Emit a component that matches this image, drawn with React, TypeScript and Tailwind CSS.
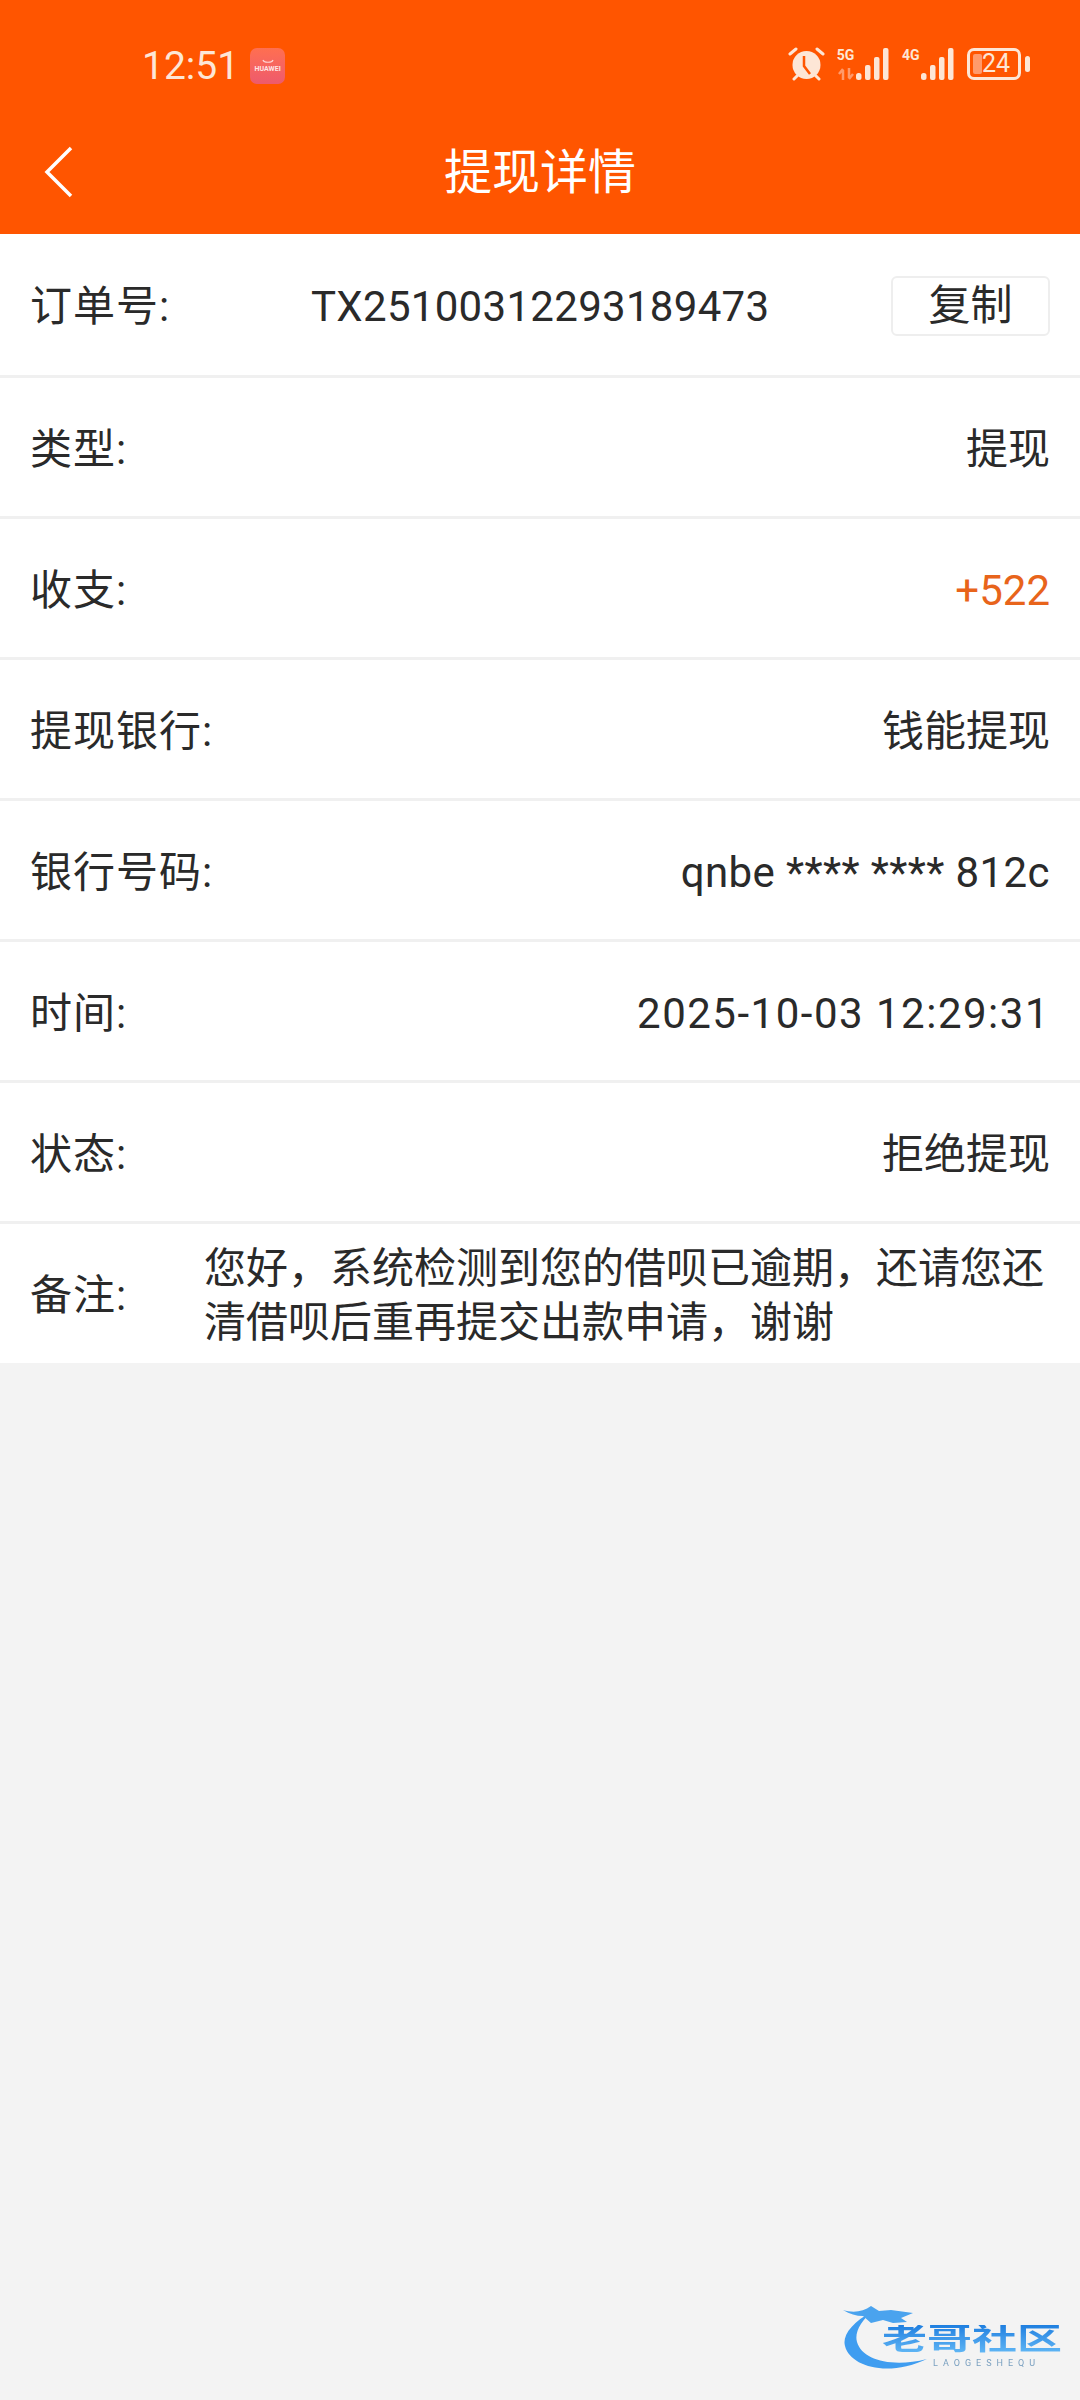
const rows = [
  { label: '类型:', value: '提现' },
  { label: '收支:', value: '+522', accent: true },
  { label: '提现银行:', value: '钱能提现' },
  { label: '银行号码:', value: 'qnbe **** **** 812c', spacing: 'tracking-[0.4px]' },
  { label: '时间:', value: '2025-10-03 12:29:31', spacing: 'tracking-[1.5px]' },
  { label: '状态:', value: '拒绝提现' },
];

function Bars() {
  return (
    <svg width="33" height="32" viewBox="0 0 33 32" fill="#fde6d6">
      <rect x="0" y="25" width="5.5" height="7" rx="2.5" />
      <rect x="9" y="17" width="5.5" height="15" rx="2" />
      <rect x="18" y="9" width="5.5" height="23" rx="2" />
      <rect x="27" y="0" width="5.5" height="32" rx="2" />
    </svg>
  );
}

function StatusBar() {
  return (
    <div className="h-[100px] flex items-start pt-[46px] pl-[142px] pr-[50px] justify-between">
      <div className="flex items-center gap-[11px]">
        <span className="text-[39px] leading-[40px] text-[#fde6d6]">12:51</span>
        <div className="w-[35px] h-[36px] rounded-[7px] bg-gradient-to-b from-[#ff6f50] to-[#ee5a6c] flex flex-col items-center justify-center">
          <svg width="14" height="6" viewBox="0 0 14 6" fill="none" stroke="#ffd5d5" strokeWidth="1.2">
            <path d="M2 1c1 3 9 3 10 0" />
          </svg>
          <span className="text-[7px] leading-[9px] font-bold text-[#ffe3e3]">HUAWEI</span>
        </div>
      </div>
      <div className="flex items-center h-[40px] -mt-[2px]">
        <svg width="37" height="34" viewBox="0 0 37 34" className="mr-[12px]">
          <circle cx="18.5" cy="18" r="14" fill="#fde6d6" />
          <path d="M16 9v10l6 8" stroke="#ff5500" strokeWidth="2.5" fill="none" />
          <path d="M2 7l6-5M35 7l-6-5M6 32l3-3M31 32l-3-3" stroke="#fde6d6" strokeWidth="3" strokeLinecap="round" />
        </svg>
        <div className="w-[17px] h-[32px] flex flex-col items-center justify-between mr-[2px]">
          <span className="text-[14px] leading-[14px] font-bold text-[#fde6d6]">5G</span>
          <svg width="16" height="12" viewBox="0 0 16 12" fill="none" stroke="#ff9a6b" strokeWidth="2.5">
            <path d="M5 12V2M1 6l4-5M11 0v10M15 6l-4 5" />
          </svg>
        </div>
        <Bars />
        <span className="w-[17px] ml-[13px] mr-[2px] text-[14px] leading-[14px] font-bold text-[#fde6d6] -mt-[18px]">4G</span>
        <Bars />
        <div className="ml-[13px] w-[54px] h-[32px] border-[3px] border-[#fde6d6] rounded-[7px] relative flex items-center justify-center">
          <div className="absolute left-[3px] top-[3px] bottom-[3px] w-[9px] bg-[#ff9a6b] rounded-[2px]" />
          <span className="relative text-[25px] leading-[26px] text-[#fde6d6] ml-[4px]">24</span>
        </div>
        <div className="w-[5px] h-[16px] rounded-full bg-[#fde6d6] ml-[4px]" />
      </div>
    </div>
  );
}

export default function App() {
  return (
    <div
      className="w-[1080px] h-[2400px] bg-[#f3f3f3] relative overflow-hidden"
      style={{ fontFamily: 'Roboto, "Noto Sans CJK SC", sans-serif' }}
    >
      {/* Header */}
      <div className="bg-[#ff5500] h-[234px]">
        <StatusBar />
        <div className="relative h-[134px] flex items-center justify-center">
          <svg width="32" height="52" viewBox="0 0 32 52" fill="none" stroke="#fff" strokeWidth="3.5" className="absolute left-[43px] top-[46px]">
            <path d="M28 2 4 26l24 24" />
          </svg>
          <h1 className="text-[48px] leading-[56px] text-white mt-[11px]">提现详情</h1>
        </div>
      </div>

      {/* Order number */}
      <div className="h-[144px] pt-[3px] bg-white border-b-[3px] border-[#f0f0f0] flex items-center pl-[30px] pr-[30px]">
        <span className="w-[281px] text-[42px] leading-[60px] pt-[2px] text-[#2a2a2a] tracking-[1px]">订单号:</span>
        <span className="text-[42px] leading-[60px] pt-[2px] text-[#2a2a2a] tracking-[0.3px]">TX25100312293189473</span>
        <button className="ml-auto w-[159px] h-[60px] bg-white border-2 border-[#eeeeee] rounded-[6px] text-[42px] leading-[54px] text-[#2a2a2a]">
          复制
        </button>
      </div>

      {rows.map((row) => (
        <div
          key={row.label}
          className="h-[141px] pt-[5px] bg-white border-b-[3px] border-[#f0f0f0] flex items-center justify-between pl-[30px] pr-[30px] text-[42px]"
        >
          <span className="text-[#2a2a2a] tracking-[1px]">{row.label}</span>
          <span className={`${row.accent ? 'text-[#e8641b]' : 'text-[#2a2a2a]'} ${row.spacing ?? ''}`}>{row.value}</span>
        </div>
      ))}

      {/* Remark */}
      <div className="h-[139px] pt-[4px] bg-white flex items-center pl-[30px] pr-[30px]">
        <span className="w-[174px] shrink-0 text-[42px] text-[#2a2a2a] tracking-[1px]">备注:</span>
        <p className="text-[42px] leading-[54px] text-[#2a2a2a] w-[845px]">
          您好，系统检测到您的借呗已逾期，还请您还清借呗后重再提交出款申请，谢谢
        </p>
      </div>

      {/* Watermark */}
      <div className="absolute left-[842px] top-[2302px] w-[226px] h-[74px] blur-[0.6px]">
        <svg width="100" height="74" viewBox="0 0 100 74" fill="none" className="absolute left-0 top-0">
          <path d="M30 10C10 20 0 34 3 44c5 20 42 32 82 13C50 66 20 58 15 40 12 30 20 18 30 10z" fill="#3f9df0" />
          <path d="M1 8c10 3 20 2 28-4l8 5 12-1 22 3-12 5 6 4-14 1-10-3-12 3-8-7C14 14 8 12 1 8z" fill="#4aa3ee" />
        </svg>
        <span className="absolute left-[40px] top-[23px] text-[45px] leading-[44px] font-bold whitespace-nowrap origin-top-left scale-y-[0.66] bg-gradient-to-b from-[#1e7fe0] to-[#62b8f5] bg-clip-text text-transparent">
          老哥社区
        </span>
        <span className="absolute left-[91px] top-[56px] text-[9px] leading-[11px] tracking-[5px] text-[#7aa0c0] whitespace-nowrap">LAOGESHEQU</span>
      </div>
    </div>
  );
}
